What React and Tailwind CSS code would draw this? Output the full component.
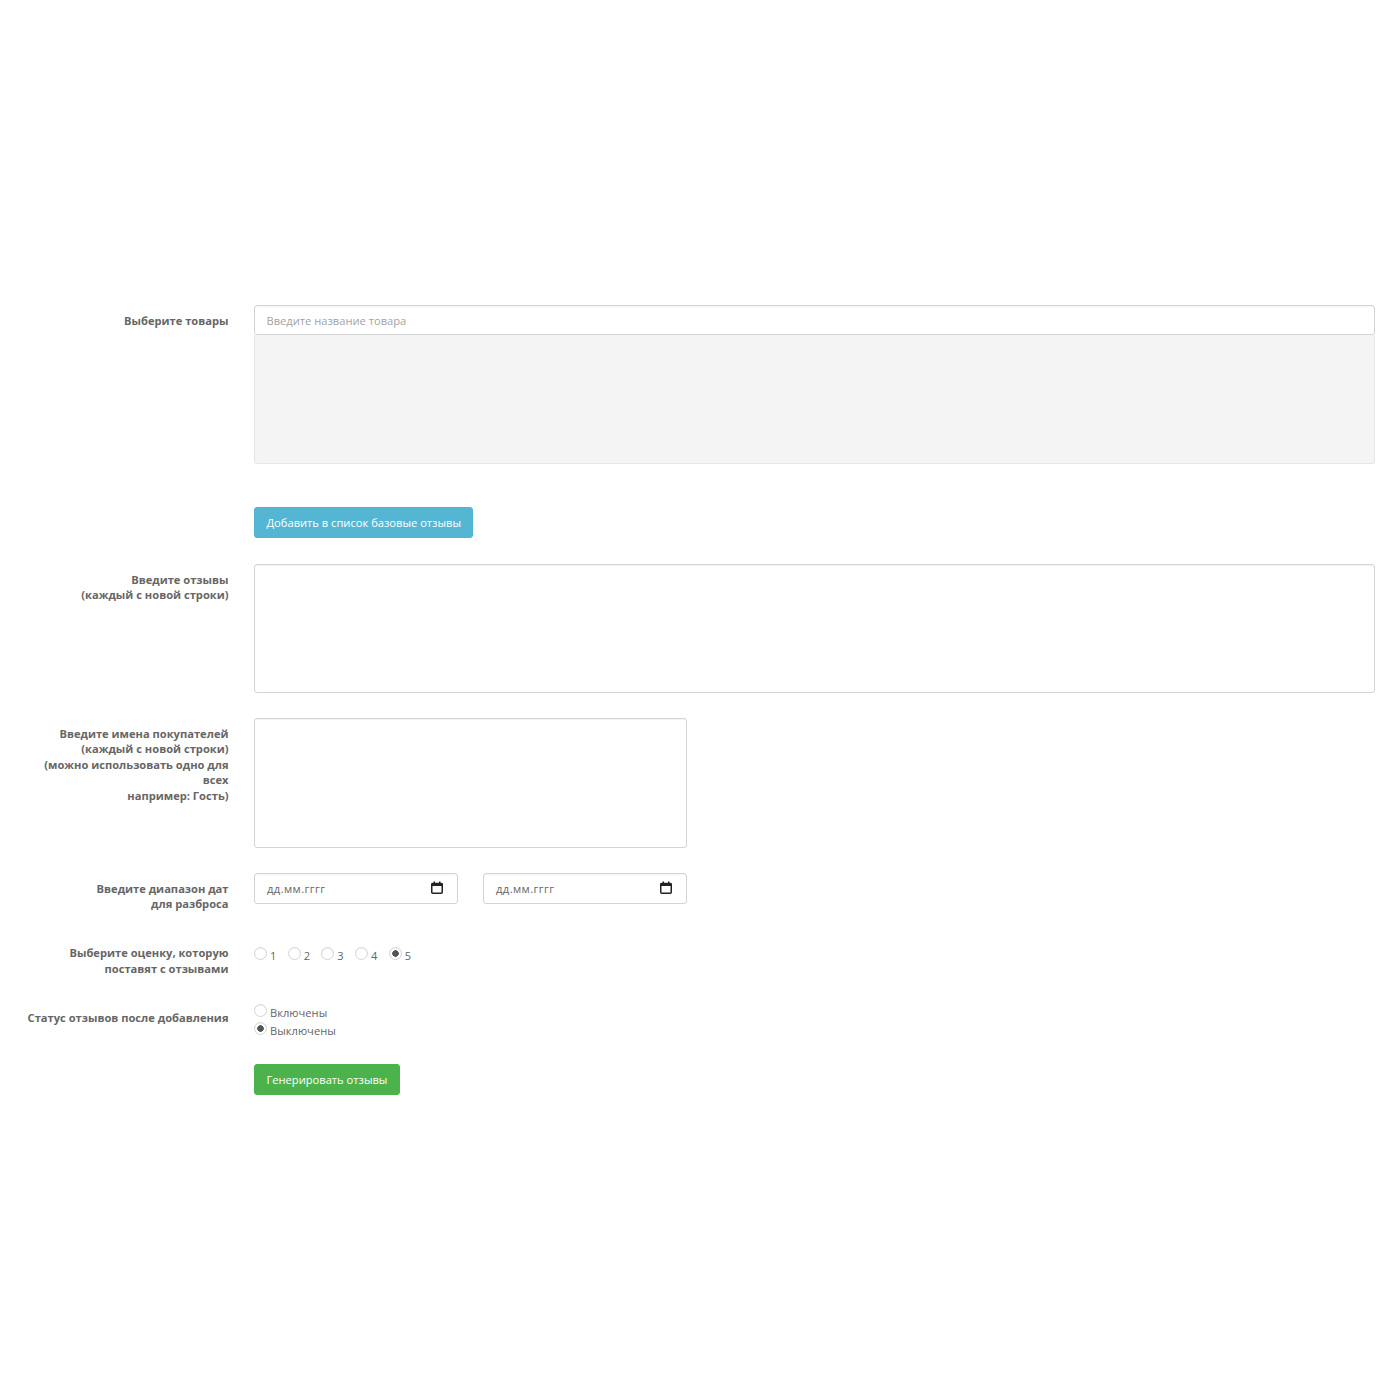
import React from "react";

function Label({ children, className = "" }) {
  return (
    <div className={`w-[228.5px] shrink-0 text-right font-bold text-[11.15px] leading-[15.5px] text-[#666666] ${className}`}>
      {children}
    </div>
  );
}

function Row({ label, labelClass, className = "", children }) {
  return (
    <div className={`flex ${className}`}>
      <Label className={labelClass}>{label}</Label>
      <div className="ml-[25.5px] flex-1 min-w-0">{children}</div>
    </div>
  );
}

function Radio({ checked, name }) {
  return (
    <input
      type="radio"
      name={name}
      defaultChecked={checked}
      className="m-0 block h-[13px] w-[13px] shrink-0 appearance-none rounded-full border border-[#d4d4d4] bg-white shadow-[inset_0_1px_1px_rgba(0,0,0,0.05)] checked:bg-[radial-gradient(circle,#555555_0,#555555_3px,#ffffff_3.5px)]"
    />
  );
}

function DateField() {
  return (
    <div className="flex h-[31px] w-[204px] items-center justify-between rounded-[3px] border border-[#d4d4d4] pl-[12px] pr-[14.5px] shadow-[inset_0_1px_1px_rgba(0,0,0,0.05)]">
      <span className="pt-[1px] text-[11.15px] tracking-[0.42px] text-[#666666]">дд.мм.гггг</span>
      <svg width="12" height="13" viewBox="0 0 12 13" className="mb-[2px]" fill="none">
        <rect x="0.75" y="2.5" width="10.5" height="9.75" rx="1" stroke="#222222" strokeWidth="1.5" />
        <rect x="0.5" y="2" width="11" height="3" fill="#222222" />
        <rect x="2.5" y="0.5" width="1.5" height="2" fill="#222222" />
        <rect x="8" y="0.5" width="1.5" height="2" fill="#222222" />
      </svg>
    </div>
  );
}

export default function App() {
  return (
    <div className="min-h-[1400px] bg-white pt-[305px] font-['Open_Sans',sans-serif] text-[11.15px] text-[#666666]">
      <div className="pr-[25px]">
        <Row label="Выберите товары" labelClass="pt-[7.5px]">
          <input
            placeholder="Введите название товара"
            className="block h-[30px] w-full rounded-[3px] border border-[#d4d4d4] bg-white px-[11.5px] text-[11.15px] outline-none shadow-[inset_0_1px_1px_rgba(0,0,0,0.05)] placeholder:text-[#a3a3a3]"
          />
          <div className="h-[129px] rounded-b-[3px] border border-t-0 border-[#e6e6e6] bg-[#f4f4f4]" />
        </Row>

        <Row label="" className="mt-[43px]">
          <button className="block h-[31px] rounded-[3px] border border-[#4fb5d6] bg-[#55b6d4] px-[11.5px] pt-[1px] text-[11.15px] text-white">
            Добавить в список базовые отзывы
          </button>
        </Row>

        <Row
          label={<>Введите отзывы<br />(каждый с новой строки)</>}
          labelClass="pt-[7.5px]"
          className="mt-[26px]"
        >
          <textarea className="block h-[129px] w-full resize-none rounded-[3px] border border-[#d4d4d4] outline-none shadow-[inset_0_1px_1px_rgba(0,0,0,0.05)]" />
        </Row>

        <Row
          label={<>Введите имена покупателей<br />(каждый с новой строки)<br />(можно использовать одно для всех<br />например: Гость)</>}
          labelClass="pt-[7.5px] pl-[30px]"
          className="mt-[25px]"
        >
          <textarea className="block h-[130px] w-[433px] resize-none rounded-[3px] border border-[#d4d4d4] outline-none shadow-[inset_0_1px_1px_rgba(0,0,0,0.05)]" />
        </Row>

        <Row
          label={<>Введите диапазон дат<br />для разброса</>}
          labelClass="pt-[7.5px]"
          className="mt-[25px]"
        >
          <div className="flex gap-[25px]">
            <DateField />
            <DateField />
          </div>
        </Row>

        <Row
          label={<>Выберите оценку, которую<br />поставят с отзывами</>}
          labelClass="-mt-[0.5px]"
          className="mt-[34px]"
        >
          <div className="flex gap-[11.3px] pt-[1px]">
            {[1, 2, 3, 4, 5].map((n) => (
              <label key={n} className="flex items-start gap-[3px]">
                <Radio name="rating" checked={n === 5} />
                <span className="mt-[1.5px] leading-[16px]">{n}</span>
              </label>
            ))}
          </div>
        </Row>

        <Row label="Статус отзывов после добавления" labelClass="pt-[7px]" className="mt-[27px]">
          <div className="flex flex-col gap-[1px] pt-[1px]">
            <label className="flex items-start gap-[3px]">
              <Radio name="status" />
              <span className="mt-[1px] leading-[16px]">Включены</span>
            </label>
            <label className="flex items-start gap-[3px]">
              <Radio name="status" checked />
              <span className="mt-[1px] leading-[16px]">Выключены</span>
            </label>
          </div>
        </Row>

        <Row label="" className="mt-[25px]">
          <button className="block h-[31px] rounded-[3px] border border-[#4cb34c] bg-[#4cb34c] px-[11.5px] pt-[1px] text-[11.15px] text-white">
            Генерировать отзывы
          </button>
        </Row>
      </div>
    </div>
  );
}
